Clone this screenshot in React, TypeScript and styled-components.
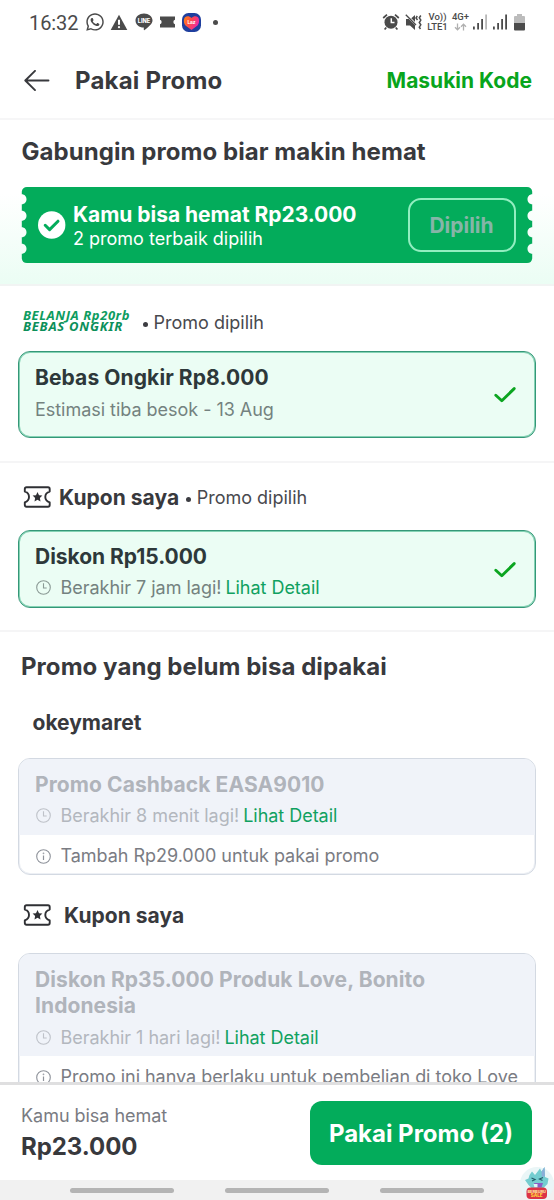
import React from 'react';
import styled, { createGlobalStyle } from 'styled-components';
import { FaWhatsapp } from 'react-icons/fa';

const GlobalStyle = createGlobalStyle`
  *, *::before, *::after { box-sizing: border-box; }
  body { margin: 0; background: #fff; font-family: Inter, "Liberation Sans", sans-serif; }
  svg { display: block; flex: none; }
  h1, h2, h3, p { margin: 0; }
`;

const ink = '#38393d';
const green = '#03ac5b';

const Screen = styled.div`
  position: relative;
  display: flex;
  flex-direction: column;
  width: 554px;
  height: 1200px;
  overflow: hidden;
  background: #fff;
  color: ${ink};
`;

const StatusBar = styled.div`
  display: flex;
  align-items: center;
  justify-content: space-between;
  height: 44px;
  flex: none;
  padding: 0 29px 0 29px;
  color: #4b4b4b;
`;

const StatusGroup = styled.div`
  display: flex;
  align-items: center;
`;

const Clock = styled.span`
  width: 56px;
  font: 400 20px/24px Roboto, sans-serif;
  letter-spacing: -0.1px;
  padding-top: 2px;
`;

const Slot = styled.span<{ $w: number }>`
  display: flex;
  width: ${p => p.$w}px;
`;

const NetLabel = styled.span<{ $w: number }>`
  display: flex;
  flex-direction: column;
  align-items: center;
  gap: 1px;
  width: ${p => p.$w}px;
  padding-right: 3px;
  font: 500 9.5px/8.5px Roboto, sans-serif;
  white-space: nowrap;
`;

const Header = styled.header`
  display: flex;
  align-items: center;
  flex: none;
  height: 76px;
  padding: 0 22px 0 24px;
  border-bottom: 2px solid #f6f6f7;
`;

const HeaderTitle = styled.h1`
  flex: 1;
  margin-left: 25px;
  font-size: 24px;
  font-weight: 700;
  letter-spacing: 0.2px;
  line-height: 30px;
`;

const HeaderAction = styled.button`
  padding: 0;
  border: 0;
  background: none;
  color: #08a51c;
  font: 700 21px/28px Inter, sans-serif;
`;

const Content = styled.main`
  flex: 1;
  min-height: 0;
  overflow: hidden;
`;

const Hero = styled.section`
  height: 166px;
  padding: 17px 21px 0;
  border-bottom: 2px solid #f1f4f3;
  background: linear-gradient(#fff 45%, #ebfdf4 100%);
`;

const SectionTitle = styled.h2<{ $ml?: number }>`
  margin-left: ${p => p.$ml ?? 0}px;
  font-size: 24px;
  font-weight: 700;
  letter-spacing: 0.06px;
  line-height: 30px;
`;

const Ticket = styled.div`
  display: flex;
  height: 76px;
  margin-top: 20px;
`;

const TicketBody = styled.div`
  display: flex;
  align-items: center;
  flex: 1;
  margin: 0 -0.5px;
  padding: 0 9px 0 8px;
  background: ${green};
  color: #fff;
`;

const TicketText = styled.div`
  flex: 1;
  margin-left: 7.5px;
  padding-top: 1px;
`;

const TicketTitle = styled.p`
  font-size: 21px;
  font-weight: 700;
  letter-spacing: -0.03px;
  line-height: 25px;
`;

const TicketNote = styled.p`
  font-size: 18px;
  line-height: 23px;
`;

const PickedButton = styled.button`
  width: 108px;
  height: 54px;
  padding: 2px 0 0;
  border: 2px solid #92eec0;
  border-radius: 13px;
  background: none;
  color: #86b5a8;
  font: 700 21px/28px Inter, sans-serif;
`;

const Section = styled.section<{ $h?: number; $top: number }>`
  ${p => p.$h && `height: ${p.$h}px;`}
  padding: ${p => p.$top}px 18px 0;
  ${p => p.$h && 'border-bottom: 2px solid #f5f5f6;'}
`;

const GroupHeader = styled.div<{ $mb: number }>`
  display: flex;
  align-items: center;
  height: 32px;
  padding-left: 5px;
  margin-bottom: ${p => p.$mb}px;
`;

const GroupTitle = styled.h3<{ $ml?: number }>`
  margin-left: ${p => p.$ml ?? 0}px;
  padding-top: 1px;
  font-size: 21px;
  font-weight: 700;
  letter-spacing: 0.03px;
  line-height: 28px;
`;

const Dot = styled.i<{ $ml: number }>`
  width: 5px;
  height: 5px;
  margin: 4px 6px 0 ${p => p.$ml}px;
  border-radius: 50%;
  background: #3c3d42;
`;

const Picked = styled.span`
  padding-top: 2px;
  font-size: 18px;
  line-height: 24px;
  color: #48494e;
`;

const Campaign = styled.div`
  display: flex;
  flex-direction: column;
  width: 119.5px;
  margin-top: -2px;
  white-space: nowrap;
`;

const CampaignLine = styled.span<{ $tracking: number; $tone: string }>`
  font: italic 700 13px/11px "Noto Sans", "Open Sans", sans-serif;
  letter-spacing: ${p => p.$tracking}px;
  color: ${p => p.$tone};
`;

const Card = styled.article<{ $h: number; $active?: boolean }>`
  display: flex;
  flex-direction: column;
  height: ${p => p.$h}px;
  overflow: hidden;
  border: ${p => (p.$active ? '1px solid #359778' : '1px solid #d3d9e2')};
  border-radius: 12px;
  background: ${p => (p.$active ? '#ebfdf4' : '#fff')};
  box-shadow: inset 0 0 0 1px ${p => (p.$active ? '#84d3b4' : '#edf0f5')};
`;

const CardTop = styled.div<{ $disabled?: boolean; $h?: number }>`
  display: flex;
  align-items: center;
  flex: ${p => (p.$h ? 'none' : '1')};
  ${p => p.$h && `height: ${p.$h}px;`}
  padding: 0 18px 0 16px;
  ${p => p.$disabled && 'background: #f0f3f9; color: #b0b4bb;'}
  ${p => !p.$disabled && 'color: #2d383a;'}
`;

const CardText = styled.div`
  flex: 1;
  align-self: flex-start;
  padding-top: 12.5px;
`;

const CardTitle = styled.h3<{ $gap?: number; $tracking?: number }>`
  margin-bottom: ${p => p.$gap ?? 6}px;
  font-size: 21px;
  font-weight: 700;
  letter-spacing: ${p => p.$tracking ?? 0.09}px;
  line-height: 26px;
`;

const Line = styled.p<{ $tone: string }>`
  display: flex;
  align-items: center;
  font-size: 18px;
  letter-spacing: -0.03px;
  line-height: 24px;
  white-space: nowrap;
  color: ${p => p.$tone};
  svg { margin: 0 9.5px 0 1px; }
`;

const DetailLink = styled.a`
  margin-left: 4px;
  color: #10a160;
`;

const CardNote = styled.div`
  padding: 9px 16px 0;
`;

const StoreName = styled.h3`
  margin: 27px 0 21px 14.5px;
  font-size: 21px;
  font-weight: 700;
  line-height: 28px;
`;

const Footer = styled.footer`
  display: flex;
  align-items: center;
  justify-content: space-between;
  flex: none;
  height: 98px;
  padding: 1px 22px 0 21px;
  border-top: 3px solid #dfdfe0;
  background: #fff;
`;

const TotalLabel = styled.p`
  font-size: 18px;
  line-height: 24px;
  letter-spacing: -0.03px;
  color: #797b82;
`;

const Total = styled.p`
  margin-top: 3px;
  font-size: 24px;
  font-weight: 700;
  letter-spacing: -0.05px;
  line-height: 31px;
`;

const ApplyButton = styled.button`
  width: 222px;
  height: 64px;
  padding: 2px 0 0;
  border: 0;
  border-radius: 12px;
  background: ${green};
  color: #fff;
  font: 700 24px/30px Inter, sans-serif;
`;

const NavBar = styled.nav`
  display: flex;
  align-items: center;
  gap: 51px;
  flex: none;
  height: 20px;
  padding-left: 70px;
  background: #f1f1f1;
`;

const Pill = styled.i`
  width: 104px;
  height: 5px;
  border-radius: 3px;
  background: #b4b4b4;
`;

const MascotBadge = styled.div`
  position: absolute;
  right: 0;
  bottom: 0;
  width: 35px;
  height: 34px;
`;

const Warning = () => (
  <svg width="18" height="17" viewBox="0 0 18 17">
    <path d="M9 .8 17.3 16H.7Z" fill="#4b4b4b" />
    <path d="M9 5.8v5" stroke="#fff" strokeWidth="2" />
    <circle cx="9" cy="13.2" r="1.1" fill="#fff" />
  </svg>
);

const LineApp = () => (
  <svg width="18" height="18" viewBox="0 0 18 18">
    <path d="M9 .5c4.7 0 8.5 3 8.5 6.9 0 3.4-4 6.3-8 9.7-.8.6-.7-.4-.7-2.5C4 14.5.5 11.3.5 7.4.5 3.5 4.3.5 9 .5Z" fill="#4b4b4b" />
    <text x="9" y="9.7" textAnchor="middle" fontFamily="Inter" fontWeight="800" fontSize="5.6" fill="#fff">LINE</text>
  </svg>
);

const Voucher = () => (
  <svg width="15" height="12" viewBox="0 0 15 12">
    <path d="M0 .5h15v3.3a2.3 2.3 0 0 0 0 4.4v3.3H0V8.2a2.3 2.3 0 0 0 0-4.4Z" fill="#4b4b4b" />
  </svg>
);

const ShopApp = () => (
  <svg width="19" height="19" viewBox="0 0 19 19">
    <defs>
      <linearGradient id="heart" x1="0" y1="0" x2="1" y2="0.4">
        <stop offset="0.1" stopColor="#ff7a1c" />
        <stop offset="0.5" stopColor="#ff4a4a" />
        <stop offset="1" stopColor="#f02aa5" />
      </linearGradient>
    </defs>
    <rect width="19" height="19" rx="6.5" fill="#1f3f9e" />
    <path d="M9.5 17 3.5 12.5C1.5 10.5 1.5 6 3 4.3 5 2.5 7.5 3 9.5 5c2-2 4.5-2.5 6.5-.7 1.5 1.7 1.500 6.200-.5 8.200Z" fill="url(#heart)" />
    <text x="9.5" y="11" textAnchor="middle" fontFamily="Inter" fontWeight="700" fontSize="4.8" fill="#fff">Laz</text>
  </svg>
);

const Alarm = () => (
  <svg width="18" height="18" viewBox="0 0 18 18">
    <circle cx="9" cy="9.2" r="6.5" fill="#4b4b4b" />
    <path d="M1.2 5 5 1.6M16.8 5 13 1.6M4.3 14.5 2.6 16.5M13.7 14.5l1.7 2" stroke="#4b4b4b" strokeWidth="1.7" />
    <path d="M9.3 5.2v4.3h3.2" fill="none" stroke="#fff" strokeWidth="1.5" />
  </svg>
);

const Muted = () => (
  <svg width="18" height="18" viewBox="0 0 18 18">
    <path d="M1 6h2.8L10 12v5L5 12.500H1ZM10 2v7L6.300 5.300Z" fill="#4b4b4b" />
    <path d="M.8 1.8 11 12" stroke="#4b4b4b" strokeWidth="1.3" />
    <path d="m12.300 3-1.300 2 1.500 2M15.800 2.500l-1.500 2.300 1.500 2.300-1.500 2.400 1.500 2.300-1.500 2.400 1.200 1.800" fill="none" stroke="#4b4b4b" strokeWidth="1.5" />
  </svg>
);

const Signal = ({ weak }: { weak?: boolean }) => (
  <svg width="15" height="16" viewBox="0 0 15 16" fill="#4b4b4b">
    <rect x="0" y="12.5" width="1.8" height="3" />
    <rect x="4.2" y="9" width="1.8" height="6.5" />
    <rect x="8.2" y="5" width="1.8" height="10.5" />
    <rect x="12.2" y="0.5" width="1.8" height="15" opacity={weak ? 0.4 : 1} />
  </svg>
);

const Battery = () => (
  <svg width="11" height="17" viewBox="0 0 11 17">
    <path d="M3 0h5v2h2q1 0 1 1v6H0V3q0-1 1-1h2Z" fill="#bcbcbc" />
    <path d="M0 9h11v6.5q0 1-1 1H1q-1 0-1-1Z" fill="#4b4b4b" />
  </svg>
);

const DataArrows = () => (
  <svg width="13" height="8" viewBox="0 0 13 8" fill="none" stroke="#b0b0b0" strokeWidth="1.3">
    <path d="M3.5.5v6M1 4.3l2.500 2.500L6 4.300M9.500 7.500v-6M7 3.700l2.500-2.500L12 3.700" />
  </svg>
);

const BackArrow = () => (
  <svg width="26" height="22" viewBox="0 0 26 22" fill="none" stroke={ink} strokeWidth="1.9" strokeLinecap="round" strokeLinejoin="round">
    <path d="M24.500 10.500H1.500M11 .9 1.300 10.500 11 20.100" />
  </svg>
);

const TicketEdge = ({ flip }: { flip?: boolean }) => (
  <svg width="9" height="76" viewBox="0 0 9 76" transform={flip ? 'scale(-1 1)' : undefined}>
    <path
      fill={green}
      d="M9 0H6Q1.500 0 .8 4.500V7.200C3.500 7.200 5.500 9.500 5.500 12.200S3.500 17.200.8 17.200V23.800C3.500 23.800 5.500 26 5.500 28.800S3.500 33.800.8 33.800V40.300C3.500 40.300 5.500 42.600 5.500 45.300S3.500 50.300.8 50.300V56.800C3.500 56.800 5.500 59 5.500 61.800S3.500 66.800.8 66.800V71.500Q1.500 76 6 76H9Z"
    />
  </svg>
);

const CheckCircle = () => (
  <svg width="28" height="28" viewBox="0 0 28 28">
    <circle cx="13.7" cy="14" r="13.7" fill="#fff" />
    <path d="m7.200 14.300 4.400 4.300 8.400-8.400" fill="none" stroke={green} strokeWidth="3" strokeLinecap="round" strokeLinejoin="round" />
  </svg>
);

const Check = () => (
  <svg width="23" height="17" viewBox="0 0 23 17">
    <path d="m1.800 9.200 6 5.500L20.200 2.600" fill="none" stroke="#0ba520" strokeWidth="2.9" strokeLinecap="round" strokeLinejoin="round" />
  </svg>
);

const CouponIcon = () => (
  <svg width="28" height="22" viewBox="0 0 28 22">
    <path
      fill="none"
      stroke="#2f3034"
      strokeWidth="1.9"
      strokeLinejoin="round"
      d="M3.500 1.300H25Q26.700 1.300 26.700 3V5.600C24.300 6.200 22.300 8.500 22.300 11S24.300 15.500 26.700 16.400V19Q26.700 20.700 25 20.700H3.500Q1.800 20.700 1.800 19V16.400C4.200 15.500 6 13.500 6 11S4.200 6.200 1.800 5.600V3Q1.800 1.300 3.500 1.300Z"
    />
    <path fill="#2f3034" d="m14.500 6 1.500 3.200 3.400.4-2.500 2.400.6 3.400-3-1.700-3 1.700.6-3.400-2.500-2.400 3.400-.4Z" />
  </svg>
);

const TimeIcon = () => (
  <svg width="15" height="15" viewBox="0 0 15 15" fill="none" stroke="currentColor" strokeWidth="1.1" opacity="0.8">
    <circle cx="7.5" cy="7.5" r="6.8" />
    <path d="M7.500 3.300v4.700h3.200" />
  </svg>
);

const InfoIcon = () => (
  <svg width="15" height="15" viewBox="0 0 15 15" fill="none" stroke="#8f939b" strokeWidth="1.1">
    <circle cx="7.5" cy="7.5" r="6.8" />
    <path d="M7.500 6.500v4.500" strokeWidth="1.2" />
    <circle cx="7.5" cy="4.3" r="0.3" />
  </svg>
);

const Mascot = () => (
  <svg width="35" height="34" viewBox="0 0 35 34">
    <circle cx="18" cy="18" r="17" fill="#eaf6f7" />
    <path d="M10.500 9 13 5.500l3 3.500 5-6.500 1.500 3L25.500 1l.5 10 3.500 1.500-1 5.500-4 4h-12L9.500 19 6 14l3.500-1.500Z" fill="#74cdd0" />
    <path d="m22.500 6 3-5 .5 9-3 1Z" fill="#8aaed8" />
    <path d="m12.500 12 3.500 1.500-3 1.500M24 11.500 20.500 13l3 1.500" fill="none" stroke="#225a68" strokeWidth="1.2" />
    <path d="M15 17h9l-1.500 4.500h-6Z" fill="#8b5cc4" />
    <path d="M14.500 18h4v3.500h-3Z" fill="#dff4f6" />
    <rect x="7.5" y="21.5" width="20.5" height="11.5" rx="4" fill="#dc3446" />
    <text x="17.7" y="26.8" textAnchor="middle" fontFamily="Inter" fontWeight="800" fontSize="3.9" fill="#ffe3a0">BERBURU</text>
    <text x="17.7" y="31.4" textAnchor="middle" fontFamily="Inter" fontWeight="800" fontSize="4.6" fill="#ffd23c">SALE</text>
  </svg>
);

export default function App() {
  return (
    <>
      <GlobalStyle />
      <Screen>
        <StatusBar>
          <StatusGroup>
            <Clock>16:32</Clock>
            <Slot $w={25}><FaWhatsapp size={20} /></Slot>
            <Slot $w={25}><Warning /></Slot>
            <Slot $w={25}><LineApp /></Slot>
            <Slot $w={22}><Voucher /></Slot>
            <Slot $w={31}><ShopApp /></Slot>
            <svg width="5" height="5"><circle cx="2.5" cy="2.5" r="2.5" fill="#4b4b4b" /></svg>
          </StatusGroup>
          <StatusGroup>
            <Slot $w={23}><Alarm /></Slot>
            <Slot $w={22}><Muted /></Slot>
            <NetLabel $w={24}><span>Vo))</span><span>LTE1</span></NetLabel>
            <NetLabel $w={22}><span>4G+</span><DataArrows /></NetLabel>
            <Slot $w={20}><Signal weak /></Slot>
            <Slot $w={21}><Signal /></Slot>
            <Battery />
          </StatusGroup>
        </StatusBar>

        <Header>
          <BackArrow />
          <HeaderTitle>Pakai Promo</HeaderTitle>
          <HeaderAction>Masukin Kode</HeaderAction>
        </Header>

        <Content>
          <Hero>
            <SectionTitle $ml={0.5}>Gabungin promo biar makin hemat</SectionTitle>
            <Ticket>
              <TicketEdge />
              <TicketBody>
                <CheckCircle />
                <TicketText>
                  <TicketTitle>Kamu bisa hemat Rp23.000</TicketTitle>
                  <TicketNote>2 promo terbaik dipilih</TicketNote>
                </TicketText>
                <PickedButton>Dipilih</PickedButton>
              </TicketBody>
              <TicketEdge flip />
            </Ticket>
          </Hero>

          <Section $h={177} $top={20}>
            <GroupHeader $mb={13}>
              <Campaign>
                <CampaignLine $tracking={0.56} $tone="#0e9c60">BELANJA Rp20rb</CampaignLine>
                <CampaignLine $tracking={0.75} $tone="#0c8f5a">BEBAS ONGKIR</CampaignLine>
              </Campaign>
              <Dot $ml={0} />
              <Picked>Promo dipilih</Picked>
            </GroupHeader>
            <Card $h={87} $active>
              <CardTop>
                <CardText>
                  <CardTitle $gap={7}>Bebas Ongkir Rp8.000</CardTitle>
                  <Line $tone="#74827f">Estimasi tiba besok - 13 Aug</Line>
                </CardText>
                <Check />
              </CardTop>
            </Card>
          </Section>

          <Section $h={169} $top={18}>
            <GroupHeader $mb={17}>
              <CouponIcon />
              <GroupTitle $ml={8}>Kupon saya</GroupTitle>
              <Dot $ml={6.5} />
              <Picked>Promo dipilih</Picked>
            </GroupHeader>
            <Card $h={78} $active>
              <CardTop>
                <CardText>
                  <CardTitle $tracking={-0.03}>Diskon Rp15.000</CardTitle>
                  <Line $tone="#74827f"><TimeIcon />Berakhir 7 jam lagi! <DetailLink>Lihat Detail</DetailLink></Line>
                </CardText>
                <Check />
              </CardTop>
            </Card>
          </Section>

          <Section $top={20}>
            <SectionTitle $ml={3}>Promo yang belum bisa dipakai</SectionTitle>
            <StoreName>okeymaret</StoreName>
            <Card $h={117}>
              <CardTop $disabled $h={76}>
                <CardText>
                  <CardTitle>Promo Cashback EASA9010</CardTitle>
                  <Line $tone="#b3b7be"><TimeIcon />Berakhir 8 menit lagi! <DetailLink>Lihat Detail</DetailLink></Line>
                </CardText>
              </CardTop>
              <CardNote>
                <Line $tone="#7a7c83"><InfoIcon />Tambah Rp29.000 untuk pakai promo</Line>
              </CardNote>
            </Card>
          </Section>

          <Section $top={24}>
            <GroupHeader $mb={22}>
              <CouponIcon />
              <GroupTitle $ml={13}>Kupon saya</GroupTitle>
            </GroupHeader>
            <Card $h={170}>
              <CardTop $disabled $h={102}>
                <CardText>
                  <CardTitle $gap={7}>Diskon Rp35.000 Produk Love, Bonito Indonesia</CardTitle>
                  <Line $tone="#b3b7be"><TimeIcon />Berakhir 1 hari lagi! <DetailLink>Lihat Detail</DetailLink></Line>
                </CardText>
              </CardTop>
              <CardNote>
                <Line $tone="#7a7c83"><InfoIcon />Promo ini hanya berlaku untuk pembelian di toko Love</Line>
              </CardNote>
            </Card>
          </Section>
        </Content>

        <Footer>
          <div>
            <TotalLabel>Kamu bisa hemat</TotalLabel>
            <Total>Rp23.000</Total>
          </div>
          <ApplyButton>Pakai Promo (2)</ApplyButton>
        </Footer>
        <NavBar>
          <Pill />
          <Pill />
          <Pill />
        </NavBar>
        <MascotBadge><Mascot /></MascotBadge>
      </Screen>
    </>
  );
}
